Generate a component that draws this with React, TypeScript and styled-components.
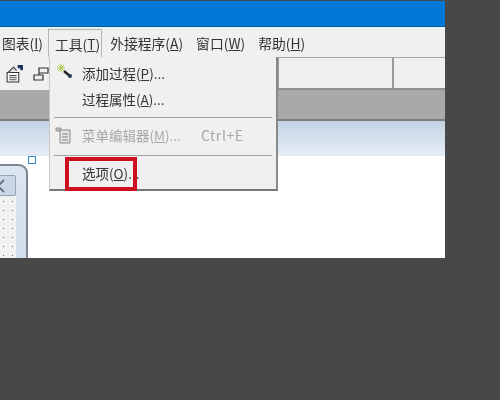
import React from 'react';
import styled, { createGlobalStyle } from 'styled-components';

const Global = createGlobalStyle`
    html, body { margin: 0; padding: 0; background: #484848; }
    body { font-family: "Noto Sans CJK SC", "Liberation Sans", sans-serif; width: 500px; height: 400px; overflow: hidden; }
`;

const Page = styled.div`
    width: 500px;
    height: 400px;
    background: #484848;
    padding-top: 1px;
    box-sizing: border-box;
`;

const Window = styled.div`
    position: relative;
    width: 445px;
    height: 257px;
    display: flex;
    flex-direction: column;
    overflow: hidden;
    background: #fff;
    filter: blur(0.35px);
`;

const TitleBar = styled.div`
    flex: 0 0 26px;
    background: #0078d7;
    border-bottom: 1px solid #0d5f9f;
    box-sizing: border-box;
`;

const MenuBar = styled.div`
    flex: 0 0 30px;
    display: flex;
    align-items: center;
    padding-left: 2px;
    gap: 13px;
    background: #f0f0f0;
    border-top: 1px solid #dff2fa;
    box-sizing: border-box;
    color: #333;
    font-size: 13.8px;
`;

const MenuItem = styled.span<{ $open?: boolean }>`
    display: flex;
    align-items: center;
    white-space: nowrap;
    ${(p) =>
        p.$open &&
        `
        align-self: flex-end;
        height: 27px;
        margin: 0 -5px 0 -8px;
        padding: 0 1px 0 6px;
        border: 1px solid #b5b5b5;
        border-bottom: none;
        `}
`;

const Key = styled.span`
    text-decoration: underline;
    text-underline-offset: 1px;
    text-decoration-thickness: 1px;
`;

const Toolbar = styled.div`
    flex: 0 0 33px;
    display: flex;
    align-items: stretch;
    background: #f0f0f0;
    box-sizing: border-box;
    padding-left: 5px;
`;

const ToolIcons = styled.div`
    flex: 0 0 272px;
    display: flex;
    align-items: center;
    gap: 9px;
    height: 33px;
`;

const Field = styled.div<{ $width: number }>`
    flex: 0 0 ${(p) => p.$width}px;
    border-top: 1px solid #a8a8a8;
    border-left: 2px solid #9a9a9a;
    border-bottom: 2px solid #8f8f8f;
    box-sizing: border-box;
    background: #f0f0f0;
`;

const GrayBand = styled.div`
    flex: 0 0 31px;
    background: #a9a9a9;
    border-bottom: 2px solid #7d7d7d;
    box-sizing: border-box;
`;

const HeaderStrip = styled.div`
    flex: 0 0 35px;
    background: linear-gradient(#c3d3e4, #e6edf4);
`;

const Canvas = styled.div`
    position: relative;
    flex: 1;
    background: #fff;
`;

const FormWindow = styled.div`
    position: absolute;
    left: -40px;
    top: 8px;
    width: 68px;
    height: 130px;
    box-sizing: border-box;
    border: 2px solid #7c8692;
    border-radius: 9px 9px 0 0;
    background: linear-gradient(#dce6f0, #cddcea);
    padding: 9px 0 0 0;
`;

const CloseButton = styled.div`
    width: 54px;
    height: 21px;
    box-sizing: border-box;
    border: 1px solid #93a6ba;
    border-radius: 2px;
    background: #c9d7e6;
    display: flex;
    align-items: center;
    justify-content: flex-end;
    padding-right: 10px;
`;

const DotGrid = styled.div`
    height: 100px;
    background-color: #eff1f3;
    background-image: radial-gradient(#666 0.7px, transparent 1px);
    background-size: 9px 9px;
    background-position: 1px 1px;
    margin-right: 10px;
`;

const Handle = styled.div`
    position: absolute;
    left: 28px;
    top: 0;
    width: 8px;
    height: 8px;
    box-sizing: border-box;
    border: 1.5px solid #2d8fc4;
    background: #fff;
`;

const Dropdown = styled.div`
    position: absolute;
    left: 49px;
    top: 56px;
    width: 229px;
    height: 134px;
    box-sizing: border-box;
    background: #f0f0f0;
    border-right: 2px solid #8a8a8a;
    border-bottom: 2px solid #777;
    border-left: 1px solid #c8c8c8;
    display: flex;
    flex-direction: column;
`;

const Row = styled.div<{ $disabled?: boolean; $height: number }>`
    position: relative;
    flex: 0 0 ${(p) => p.$height}px;
    display: flex;
    align-items: center;
    padding-left: 32px;
    font-size: 13.5px;
    white-space: nowrap;
    color: ${(p) => (p.$disabled ? '#a8a8a8' : '#333')};
`;

const RowIcon = styled.svg<{ $top: number }>`
    position: absolute;
    left: 5px;
    top: ${(p) => p.$top}px;
`;

const Shortcut = styled.span`
    margin-left: 20px;
    font-size: 14px;
    letter-spacing: 0.6px;
`;

const Separator = styled.div<{ $after: number }>`
    flex: 0 0 1px;
    margin: 8px 4px ${(p) => p.$after}px;
    background: #a4a4a4;
`;

const Highlight = styled.div`
    position: absolute;
    left: 65px;
    top: 156px;
    width: 72px;
    height: 34px;
    box-sizing: border-box;
    border: 4px solid #cc1020;
`;

const PropsIcon = () => (
    <svg width="19" height="19" viewBox="0 0 18 18" fill="none">
        <path d="M2 8h11v9H2z" fill="#fff" stroke="#333" />
        <path d="M4 11h7M4 13h7M4 15h7" stroke="#555" />
        <path d="M3 8l5-5 3 3" stroke="#333" fill="#ddd" />
        <path d="M12 1h5v5h-2l-1-2h-2z" fill="#1c2f5f" />
    </svg>
);

const TreeIcon = () => (
    <svg width="16" height="16" viewBox="0 0 16 16" fill="none" stroke="#333" strokeWidth="1.2">
        <path d="M6 2h9v5H6zM1 9h9v5H1zM6 7v2" />
    </svg>
);

const WandIcon = () => (
    <RowIcon $top={6} width="20" height="20" viewBox="0 0 20 20" fill="none">
        <path d="M6 1v8M2 5h8M3 2l6 6M9 2L3 8" stroke="#a9c544" strokeWidth="1" />
        <path d="M9 8l7 6" stroke="#222" strokeWidth="2.4" />
        <circle cx="15" cy="13" r="2" fill="#2a3b52" />
    </RowIcon>
);

const MenuEditorIcon = () => (
    <RowIcon $top={3} width="18" height="18" viewBox="0 0 18 18" fill="none">
        <path d="M1 2h5v3H1z" fill="#bbb" stroke="#999" />
        <path d="M5 4h10v13H5z" fill="#e4e4e4" stroke="#888" />
        <path d="M7 8h6M7 11h6M7 14h6" stroke="#888" />
    </RowIcon>
);

const CloseIcon = () => (
    <svg width="14" height="14" viewBox="0 0 14 14" fill="none" stroke="#5f6f80" strokeWidth="1.8">
        <path d="M1 1l12 12M13 1L1 13" />
    </svg>
);

export default function App() {
    return (
        <Page>
            <Global />
            <Window>
                <TitleBar />
                <MenuBar>
                    <MenuItem>图表(<Key>I</Key>)</MenuItem>
                    <MenuItem $open>工具(<Key>T</Key>)</MenuItem>
                    <MenuItem>外接程序(<Key>A</Key>)</MenuItem>
                    <MenuItem>窗口(<Key>W</Key>)</MenuItem>
                    <MenuItem>帮助(<Key>H</Key>)</MenuItem>
                </MenuBar>
                <Toolbar>
                    <ToolIcons>
                        <PropsIcon />
                        <TreeIcon />
                    </ToolIcons>
                    <Field $width={115} />
                    <Field $width={55} />
                </Toolbar>
                <GrayBand />
                <HeaderStrip />
                <Canvas>
                    <FormWindow>
                        <CloseButton>
                            <CloseIcon />
                        </CloseButton>
                        <DotGrid />
                    </FormWindow>
                    <Handle />
                </Canvas>
                <Dropdown>
                    <Row $height={32}>
                        <WandIcon />
                        添加过程(<Key>P</Key>)...
                    </Row>
                    <Row $height={18}>过程属性(<Key>A</Key>)...</Row>
                    <Separator $after={5} />
                    <Row $height={24} $disabled>
                        <MenuEditorIcon />
                        菜单编辑器(<Key>M</Key>)...
                        <Shortcut>Ctrl+E</Shortcut>
                    </Row>
                    <Separator $after={7} />
                    <Row $height={20}>选项(<Key>O</Key>)...</Row>
                </Dropdown>
                <Highlight />
            </Window>
        </Page>
    );
}
